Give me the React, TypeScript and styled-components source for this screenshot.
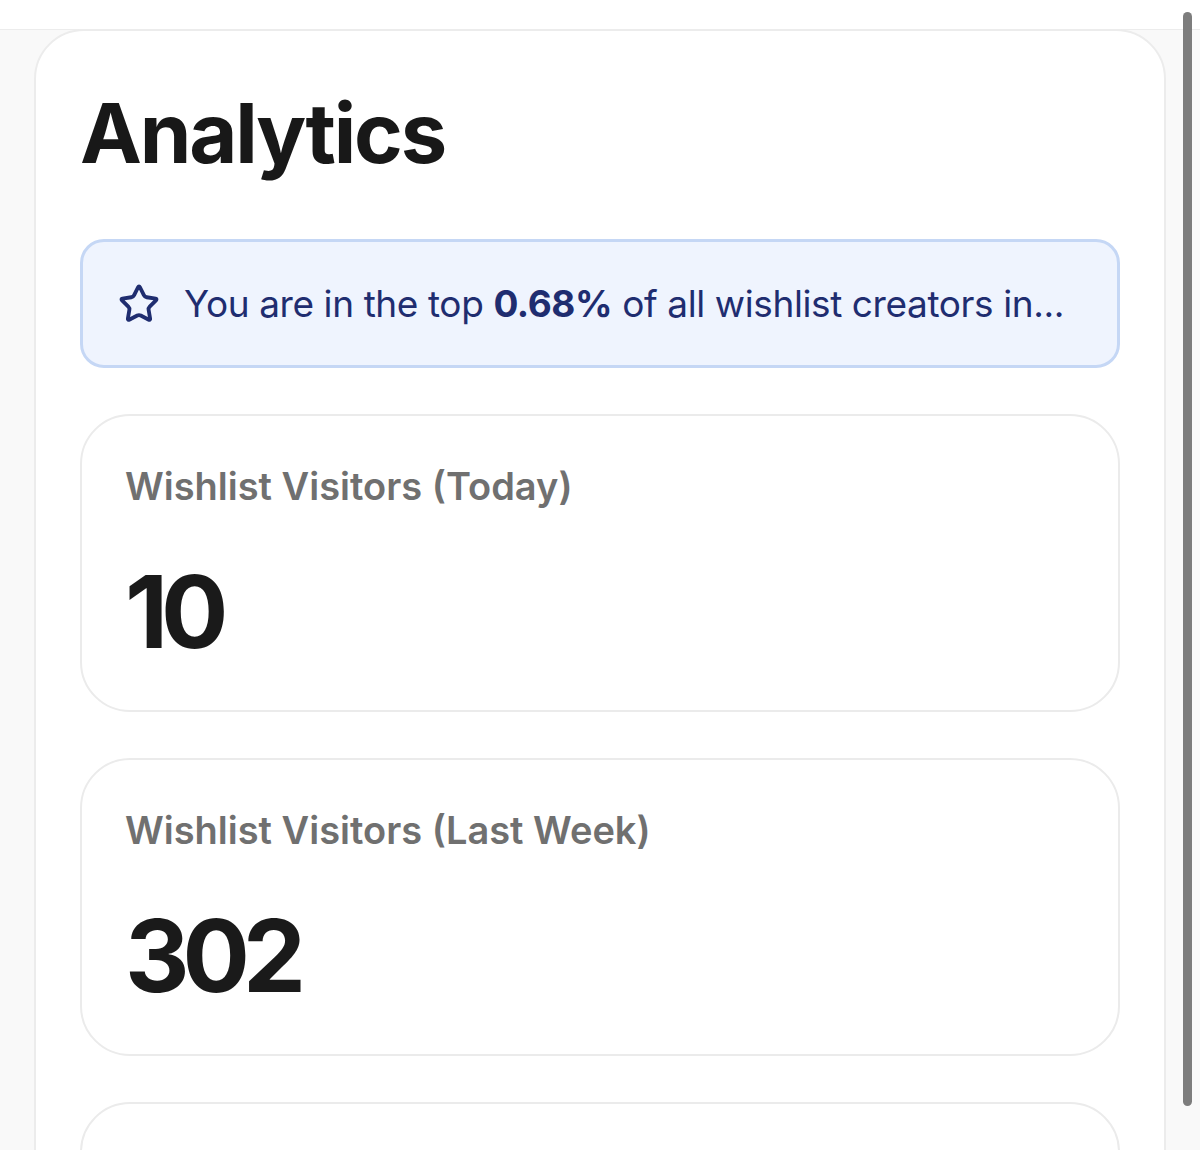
import { Star } from 'lucide-react'
import styled, { createGlobalStyle } from 'styled-components'

const GlobalStyle = createGlobalStyle`
  html, body {
    margin: 0;
    padding: 0;
    background: #f9f9f9;
    overflow: hidden;
  }
  body {
    font-family: Inter, "Noto Sans", sans-serif;
    -webkit-font-smoothing: antialiased;
  }
`

const Page = styled.div`
  height: 1150px;
  overflow: hidden;
`

const TopBar = styled.div`
  height: 29px;
  background: #ffffff;
  border-bottom: 1px solid #ececec;
`

const Panel = styled.main`
  margin: -1px 0 0 34px;
  width: 1132px;
  box-sizing: border-box;
  min-height: 1200px;
  padding: 52px 44px 0 44px;
  background: #ffffff;
  border: 2px solid #ececec;
  border-radius: 50px 50px 0 0;
  display: flex;
  flex-direction: column;
  gap: 46px;
`

const Title = styled.h1`
  margin: 0 0 10px 0;
  font-size: 83px;
  line-height: 100px;
  font-weight: 700;
  letter-spacing: -2.2px;
  color: #181818;
`

const Banner = styled.div`
  height: 129px;
  box-sizing: border-box;
  display: flex;
  align-items: center;
  gap: 24px;
  padding: 0 20px 0 35px;
  background: #eff4fe;
  border: 3px solid #c5d7f5;
  border-radius: 24px;
  color: #1f2d70;
  font-size: 37px;
  letter-spacing: -0.4px;
  white-space: nowrap;

  svg {
    flex-shrink: 0;
  }
`

const Strong = styled.b`
  font-weight: 700;
`

const StatCard = styled.section`
  height: 298px;
  box-sizing: border-box;
  padding: 46px 44px 0 43px;
  border: 2px solid #ebebeb;
  border-radius: 50px;
  background: #ffffff;
`

const StatLabel = styled.div`
  font-size: 38px;
  line-height: 48px;
  font-weight: 600;
  color: #707070;
`

const StatValue = styled.div`
  margin-top: 52px;
  font-size: 100px;
  line-height: 100px;
  font-weight: 700;
  letter-spacing: -7px;
  color: #1a1a1a;
`

const ScrollThumb = styled.div`
  position: fixed;
  top: 12px;
  right: 8px;
  width: 9px;
  height: 1094px;
  border-radius: 5px;
  background: #7d7d7d;
`

const stats = [
  { label: 'Wishlist Visitors (Today)', value: '10' },
  { label: 'Wishlist Visitors (Last Week)', value: '302' },
  { label: '', value: '' },
]

export default function App() {
  return (
    <Page>
      <GlobalStyle />
      <TopBar />
      <Panel>
        <Title>Analytics</Title>
        <Banner>
          <Star size={42} strokeWidth={2.2} />
          <span>
            You are in the top <Strong>0.68%</Strong> of all wishlist creators in...
          </span>
        </Banner>
        {stats.map((s, i) => (
          <StatCard key={i}>
            <StatLabel>{s.label}</StatLabel>
            <StatValue>{s.value}</StatValue>
          </StatCard>
        ))}
      </Panel>
      <ScrollThumb />
    </Page>
  )
}
